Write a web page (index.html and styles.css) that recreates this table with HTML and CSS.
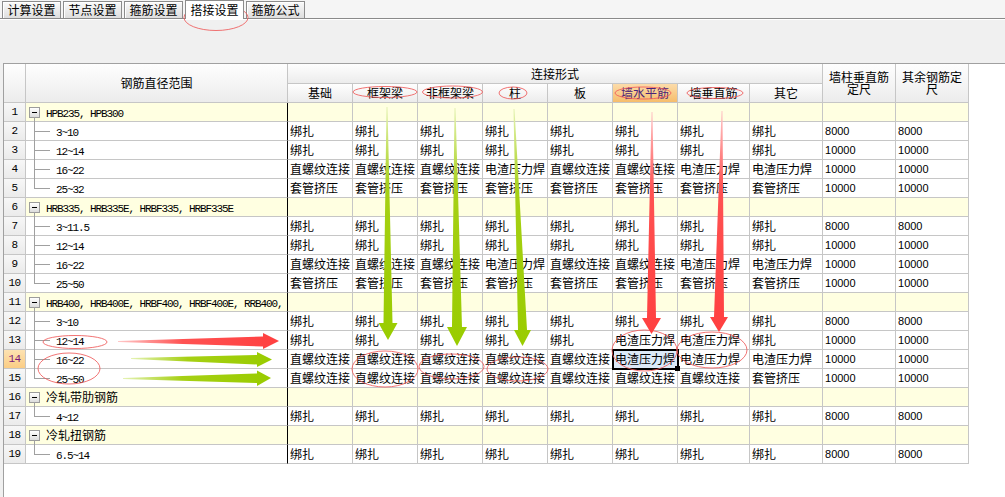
FILE: index.html
```html
<!DOCTYPE html>
<html lang="zh-CN">
<head>
<meta charset="utf-8">
<title>搭接设置</title>
<link rel="stylesheet" href="styles.css">
</head>
<body>
<div class="tabs">
  <div class="tab">计算设置</div>
  <div class="tab">节点设置</div>
  <div class="tab">箍筋设置</div>
  <div class="tab active">搭接设置</div>
  <div class="tab">箍筋公式</div>
</div>
<div class="toolbar"></div>
<div class="sheet">
<table class="grid">
<colgroup>
<col class="c-num"><col class="c-range"><col class="c-65" span="6"><col class="c-72"><col class="c-73" span="3">
</colgroup>
<thead>
<tr class="h1">
<th rowspan="2" class="corner"></th>
<th rowspan="2">钢筋直径范围</th>
<th colspan="8">连接形式</th>
<th rowspan="2" class="wrap"><span class="ln">墙柱垂直筋</span><span class="ln">定尺</span></th>
<th rowspan="2" class="wrap"><span class="ln">其余钢筋定</span><span class="ln">尺</span></th>
</tr>
<tr class="h2">
<th>基础</th><th>框架梁</th><th>非框架梁</th><th>柱</th><th>板</th><th class="hl">墙水平筋</th><th>墙垂直筋</th><th>其它</th>
</tr>
</thead>
<tbody>
<tr class="grp"><td class="num">1</td><td class="rng open"><span class="box"></span><span class="lat">HPB235, HPB300</span></td><td></td><td></td><td></td><td></td><td></td><td></td><td></td><td></td><td></td><td></td></tr>
<tr><td class="num">2</td><td class="rng child"><span class="lat">3~10</span></td><td>绑扎</td><td>绑扎</td><td>绑扎</td><td>绑扎</td><td>绑扎</td><td>绑扎</td><td>绑扎</td><td>绑扎</td><td class="n">8000</td><td class="n">8000</td></tr>
<tr><td class="num">3</td><td class="rng child"><span class="lat">12~14</span></td><td>绑扎</td><td>绑扎</td><td>绑扎</td><td>绑扎</td><td>绑扎</td><td>绑扎</td><td>绑扎</td><td>绑扎</td><td class="n">10000</td><td class="n">10000</td></tr>
<tr><td class="num">4</td><td class="rng child"><span class="lat">16~22</span></td><td>直螺纹连接</td><td>直螺纹连接</td><td>直螺纹连接</td><td>电渣压力焊</td><td>直螺纹连接</td><td>直螺纹连接</td><td>电渣压力焊</td><td>电渣压力焊</td><td class="n">10000</td><td class="n">10000</td></tr>
<tr><td class="num">5</td><td class="rng child last"><span class="lat">25~32</span></td><td>套管挤压</td><td>套管挤压</td><td>套管挤压</td><td>套管挤压</td><td>套管挤压</td><td>套管挤压</td><td>套管挤压</td><td>套管挤压</td><td class="n">10000</td><td class="n">10000</td></tr>
<tr class="grp"><td class="num">6</td><td class="rng open"><span class="box"></span><span class="lat">HRB335, HRB335E, HRBF335, HRBF335E</span></td><td></td><td></td><td></td><td></td><td></td><td></td><td></td><td></td><td></td><td></td></tr>
<tr><td class="num">7</td><td class="rng child"><span class="lat">3~11.5</span></td><td>绑扎</td><td>绑扎</td><td>绑扎</td><td>绑扎</td><td>绑扎</td><td>绑扎</td><td>绑扎</td><td>绑扎</td><td class="n">8000</td><td class="n">8000</td></tr>
<tr><td class="num">8</td><td class="rng child"><span class="lat">12~14</span></td><td>绑扎</td><td>绑扎</td><td>绑扎</td><td>绑扎</td><td>绑扎</td><td>绑扎</td><td>绑扎</td><td>绑扎</td><td class="n">10000</td><td class="n">10000</td></tr>
<tr><td class="num">9</td><td class="rng child"><span class="lat">16~22</span></td><td>直螺纹连接</td><td>直螺纹连接</td><td>直螺纹连接</td><td>电渣压力焊</td><td>直螺纹连接</td><td>直螺纹连接</td><td>电渣压力焊</td><td>电渣压力焊</td><td class="n">10000</td><td class="n">10000</td></tr>
<tr><td class="num">10</td><td class="rng child last"><span class="lat">25~50</span></td><td>套管挤压</td><td>套管挤压</td><td>套管挤压</td><td>套管挤压</td><td>套管挤压</td><td>套管挤压</td><td>套管挤压</td><td>套管挤压</td><td class="n">10000</td><td class="n">10000</td></tr>
<tr class="grp"><td class="num">11</td><td class="rng open"><span class="box"></span><span class="lat">HRB400, HRB400E, HRBF400, HRBF400E, RRB400,</span></td><td></td><td></td><td></td><td></td><td></td><td></td><td></td><td></td><td></td><td></td></tr>
<tr><td class="num">12</td><td class="rng child"><span class="lat">3~10</span></td><td>绑扎</td><td>绑扎</td><td>绑扎</td><td>绑扎</td><td>绑扎</td><td>绑扎</td><td>绑扎</td><td>绑扎</td><td class="n">8000</td><td class="n">8000</td></tr>
<tr><td class="num">13</td><td class="rng child"><span class="lat">12~14</span></td><td>绑扎</td><td>绑扎</td><td>绑扎</td><td>绑扎</td><td>绑扎</td><td>电渣压力焊</td><td>电渣压力焊</td><td>绑扎</td><td class="n">10000</td><td class="n">10000</td></tr>
<tr><td class="num hl">14</td><td class="rng child"><span class="lat">16~22</span></td><td>直螺纹连接</td><td>直螺纹连接</td><td>直螺纹连接</td><td>直螺纹连接</td><td>直螺纹连接</td><td class="sel">电渣压力焊</td><td>电渣压力焊</td><td>电渣压力焊</td><td class="n">10000</td><td class="n">10000</td></tr>
<tr><td class="num">15</td><td class="rng child last"><span class="lat">25~50</span></td><td>直螺纹连接</td><td>直螺纹连接</td><td>直螺纹连接</td><td>直螺纹连接</td><td>直螺纹连接</td><td>直螺纹连接</td><td>直螺纹连接</td><td>套管挤压</td><td class="n">10000</td><td class="n">10000</td></tr>
<tr class="grp"><td class="num">16</td><td class="rng open"><span class="box"></span>冷轧带肋钢筋</td><td></td><td></td><td></td><td></td><td></td><td></td><td></td><td></td><td></td><td></td></tr>
<tr><td class="num">17</td><td class="rng child last"><span class="lat">4~12</span></td><td>绑扎</td><td>绑扎</td><td>绑扎</td><td>绑扎</td><td>绑扎</td><td>绑扎</td><td>绑扎</td><td>绑扎</td><td class="n">8000</td><td class="n">8000</td></tr>
<tr class="grp"><td class="num">18</td><td class="rng open"><span class="box"></span>冷轧扭钢筋</td><td></td><td></td><td></td><td></td><td></td><td></td><td></td><td></td><td></td><td></td></tr>
<tr><td class="num">19</td><td class="rng child last"><span class="lat">6.5~14</span></td><td>绑扎</td><td>绑扎</td><td>绑扎</td><td>绑扎</td><td>绑扎</td><td>绑扎</td><td>绑扎</td><td>绑扎</td><td class="n">8000</td><td class="n">8000</td></tr>
</tbody>
</table>
</div>

<svg class="marks" width="1005" height="497" viewBox="0 0 1005 497" aria-hidden="true">
  <defs>
    <linearGradient id="gv" x1="0" y1="0" x2="0" y2="1">
      <stop offset="0" stop-color="#e4f2b4"/>
      <stop offset="0.35" stop-color="#a6d014"/>
      <stop offset="1" stop-color="#99cc00"/>
    </linearGradient>
    <linearGradient id="rv" x1="0" y1="0" x2="0" y2="1">
      <stop offset="0" stop-color="#ffc8c8"/>
      <stop offset="0.35" stop-color="#ff5252"/>
      <stop offset="1" stop-color="#ff4040"/>
    </linearGradient>
    <linearGradient id="gh" x1="0" y1="0" x2="1" y2="0">
      <stop offset="0" stop-color="#e4f2b4"/>
      <stop offset="0.4" stop-color="#a6d014"/>
      <stop offset="1" stop-color="#99cc00"/>
    </linearGradient>
    <linearGradient id="rh" x1="0" y1="0" x2="1" y2="0">
      <stop offset="0" stop-color="#ffc8c8"/>
      <stop offset="0.4" stop-color="#ff5252"/>
      <stop offset="1" stop-color="#ff4040"/>
    </linearGradient>
  </defs>
  <g class="rings">
    <ellipse cx="216" cy="17.5" rx="32" ry="13"/>
    <ellipse cx="385" cy="92" rx="32" ry="5.5"/>
    <ellipse cx="452.5" cy="92" rx="30" ry="6"/>
    <ellipse cx="513" cy="93" rx="14" ry="6"/>
    <ellipse cx="643" cy="93" rx="28" ry="6"/>
    <ellipse cx="715" cy="93" rx="28" ry="5.5"/>
    <ellipse cx="75" cy="342" rx="32" ry="6.5"/>
    <ellipse cx="69" cy="368.5" rx="31" ry="15.5"/>
    <ellipse cx="385" cy="369" rx="33" ry="18"/>
    <ellipse cx="451.5" cy="366.5" rx="32.5" ry="12.5"/>
    <ellipse cx="517.5" cy="369" rx="30.5" ry="12"/>
    <ellipse cx="644.5" cy="350.5" rx="32.5" ry="20.5"/>
    <ellipse cx="712" cy="350" rx="35" ry="18"/>
  </g>
  <polygon fill="url(#gv)" points="386.5,107 387.5,107 392.5,323 397.5,323 388,340 378.5,323 383.5,323"/>
  <polygon fill="url(#gv)" points="454.5,108 455.5,108 462,327 467,327 457,346 447,327 452,327"/>
  <polygon fill="url(#gv)" points="513.5,109 514.5,109 527,330 531,330 522.5,346 514,330 518,330"/>
  <polygon fill="url(#rv)" points="651.5,112 652.5,112 656,318 661,318 651.5,334 642,318 647,318"/>
  <polygon fill="url(#rv)" points="721.5,111 722.5,111 724,317 728,317 719,332 710,317 714,317"/>
  <polygon fill="url(#rh)" points="118,341 263,336.5 263,333 279,341 263,349 263,346.5 118,342"/>
  <polygon fill="url(#gh)" points="131,358 257,355 257,352 272,359.5 257,367 257,364.5 131,359"/>
  <polygon fill="url(#gh)" points="123,378 257,373.5 257,370.5 271,378 257,386 257,383 123,379"/>
</svg>
</body>
</html>
```
FILE: styles.css
```css
html, body {
  margin: 0;
  height: 100%;
}

body {
  position: relative;
  overflow: hidden;
  background: #f0f0f0;
  color: #000;
  font-family: "Noto Sans CJK SC", "Noto Sans", sans-serif;
  font-size: 12px;
}

/* ---------- tabs ---------- */
.tabs {
  box-sizing: border-box;
  display: flex;
  align-items: flex-end;
  height: 19px;
  padding-left: 2px;
  background: #f5f5f5;
  border-bottom: 1px solid #8a8a8a;
}

.tab {
  box-sizing: border-box;
  width: 59px;
  height: 17px;
  margin-right: 2px;
  border: 1px solid #8c8c8c;
  border-bottom: none;
  background: linear-gradient(#fafafa, #dedede);
  box-shadow: inset 1px 1px 0 #fff;
  text-align: center;
  line-height: 16px;
  white-space: nowrap;
}

.tab.active {
  position: relative;
  z-index: 1;
  height: 19px;
  margin-bottom: -1px;
  background: #fff;
  box-shadow: none;
  line-height: 17px;
}

/* ---------- empty tool panel ---------- */
.toolbar {
  box-sizing: border-box;
  height: 44px;
  border-top: 1px solid #fff;
  background: #f0f0f0;
}

/* ---------- sheet ---------- */
.sheet {
  box-sizing: border-box;
  height: calc(100% - 63px);
  margin-left: 3px;
  border-top: 1px solid #a0a0a0;
  border-left: 1px solid #a0a0a0;
  background: #fff;
  overflow: hidden;
}

.grid {
  table-layout: fixed;
  width: 965px;
  border-collapse: separate;
  border-spacing: 0;
}

.c-num { width: 22px; }
.c-range { width: 262px; }
.c-65 { width: 65px; }
.c-72 { width: 72px; }
.c-73 { width: 73px; }

.grid th,
.grid td {
  box-sizing: content-box;
  height: 18px;
  padding: 0 2px;
  border-right: 1px solid #c6c6c6;
  border-bottom: 1px solid #c6c6c6;
  line-height: 18px;
  white-space: nowrap;
  overflow: hidden;
  text-align: left;
  font-weight: normal;
}

.grid th {
  background: linear-gradient(#fefefe, #ececec);
  text-align: center;
}

.grid .h1 th {
  height: 19px;
}

.grid th.wrap {
  padding-top: 0;
  line-height: 12px;
}

.grid th.wrap .ln {
  display: block;
  height: 12px;
  line-height: 12px;
}

.grid th.hl {
  background: linear-gradient(#fcdcaa, #f6bd6c);
  color: #4a2479;
}

/* row numbers */
.grid td.num {
  padding: 0;
  text-align: center;
  background: linear-gradient(#f7f7f7, #ebebeb);
}

.grid td.num,
.lat {
  font-family: "Liberation Mono", monospace;
  font-size: 11px;
  line-height: 12px;
}

.grid td.num {
  line-height: 18px;
  letter-spacing: -0.6px;
}

.grid td.num.hl {
  background: linear-gradient(#fde2b2, #fbcd85);
  color: #7a1a7a;
}

/* group rows */
.grp td:not(.num) {
  background: #ffffe1;
}

/* tree column */
.grid td.rng {
  position: relative;
  overflow: visible;
  border-right-color: #000;
}

.lat {
  letter-spacing: -1.1px;
}

.box {
  position: relative;
  display: inline-block;
  box-sizing: border-box;
  width: 11px;
  height: 11px;
  margin: 0 6px 0 1px;
  vertical-align: -1px;
  border: 1px solid #9c9c9c;
  background: linear-gradient(#ffffff, #dcdcdc);
}

.box::after {
  content: "";
  position: absolute;
  left: 2px;
  top: 4px;
  width: 5px;
  height: 1px;
  background: #000;
}

.grid td.open::after {
  content: "";
  position: absolute;
  left: 8px;
  top: 14px;
  bottom: -1px;
  width: 1px;
  background: #a0a0a0;
}

.grid td.child {
  padding-left: 30px;
}

.grid td.child::before {
  content: "";
  position: absolute;
  left: 8px;
  top: 0;
  bottom: -1px;
  width: 1px;
  background: #a0a0a0;
}

.grid td.child.last::before {
  bottom: auto;
  height: 10px;
}

.grid td.child::after {
  content: "";
  position: absolute;
  left: 8px;
  top: 9px;
  width: 16px;
  height: 1px;
  background: #a0a0a0;
}

/* numeric cells */
.grid td.n {
  font-family: "Liberation Sans", Arial, sans-serif;
  font-size: 11px;
}

/* selected cell */
.grid td.sel {
  position: relative;
  overflow: visible;
  background: #dce9f7;
  outline: 2px solid #000;
  outline-offset: -1px;
}

.grid td.sel::after {
  content: "";
  position: absolute;
  right: -3px;
  bottom: -3px;
  width: 5px;
  height: 5px;
  background: #000;
  z-index: 2;
}

/* annotation overlay */
.marks {
  position: absolute;
  left: 0;
  top: 0;
  pointer-events: none;
}

.rings ellipse {
  fill: none;
  stroke: #ee5a5a;
  stroke-width: 1;
  stroke-opacity: 0.85;
}
```
